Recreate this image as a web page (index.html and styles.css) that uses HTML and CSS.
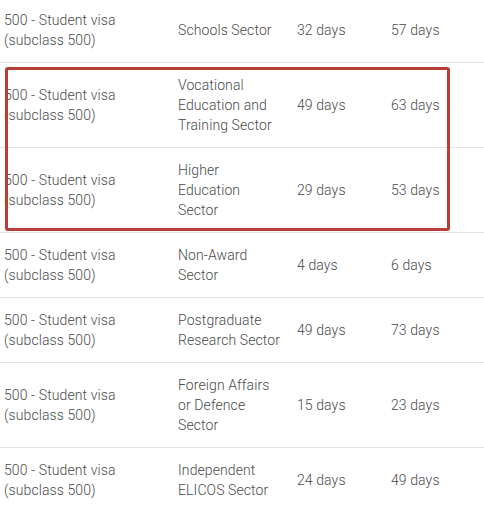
FILE: index.html
```html
<!DOCTYPE html>
<html lang="en">
<head>
    <meta charset="UTF-8">
    <meta name="viewport" content="width=device-width, initial-scale=1.0">
    <title>Student visa processing times</title>
    <link rel="stylesheet" href="styles.css">
</head>
<body>
    <div class="wrap">
        <table class="times">
            <tr>
                <td class="visa">500 - Student visa<br>(subclass 500)</td>
                <td class="sector">Schools Sector</td>
                <td class="days">32 days</td>
                <td class="days">57 days</td>
            </tr>
            <tr>
                <td class="visa">500 - Student visa<br>(subclass 500)</td>
                <td class="sector">Vocational<br>Education and<br>Training Sector</td>
                <td class="days">49 days</td>
                <td class="days">63 days</td>
            </tr>
            <tr>
                <td class="visa">500 - Student visa<br>(subclass 500)</td>
                <td class="sector">Higher<br>Education<br>Sector</td>
                <td class="days">29 days</td>
                <td class="days">53 days</td>
            </tr>
            <tr>
                <td class="visa">500 - Student visa<br>(subclass 500)</td>
                <td class="sector">Non-Award<br>Sector</td>
                <td class="days">4 days</td>
                <td class="days">6 days</td>
            </tr>
            <tr>
                <td class="visa">500 - Student visa<br>(subclass 500)</td>
                <td class="sector">Postgraduate<br>Research Sector</td>
                <td class="days">49 days</td>
                <td class="days">73 days</td>
            </tr>
            <tr>
                <td class="visa">500 - Student visa<br>(subclass 500)</td>
                <td class="sector">Foreign Affairs<br>or Defence<br>Sector</td>
                <td class="days">15 days</td>
                <td class="days">23 days</td>
            </tr>
            <tr>
                <td class="visa">500 - Student visa<br>(subclass 500)</td>
                <td class="sector">Independent<br>ELICOS Sector</td>
                <td class="days">24 days</td>
                <td class="days">49 days</td>
            </tr>
        </table>

        <!-- highlight drawn over the vocational and higher education rows -->
        <div class="highlight"></div>
    </div>
</body>
</html>
```

FILE: styles.css
```css
body {
    margin: 0;
    font-family: Roboto, "Liberation Sans", Arial, sans-serif;
    font-size: 14px;
    font-weight: 300;
    line-height: 20px;
    letter-spacing: 0.1px;
    color: #4a4a4a;
    background-color: #fff;
    overflow: hidden;
}
.wrap {
    position: relative;
    margin-top: -2px;
}
.times {
    width: 484px;
    border-collapse: collapse;
    table-layout: fixed;
}
.times td {
    padding: 12px 0 12px 4px;
    border-bottom: 1px solid #e2e2e2;
    vertical-align: middle;
}
.visa {
    width: 170px;
}
.sector {
    width: 115px;
}
.times td.days:nth-child(3) {
    width: 90px;
}
.highlight {
    position: absolute;
    left: 5px;
    top: 69px;
    width: 439px;
    height: 158px;
    border: 3px solid #b53e37;
    border-radius: 3px;
}
```
